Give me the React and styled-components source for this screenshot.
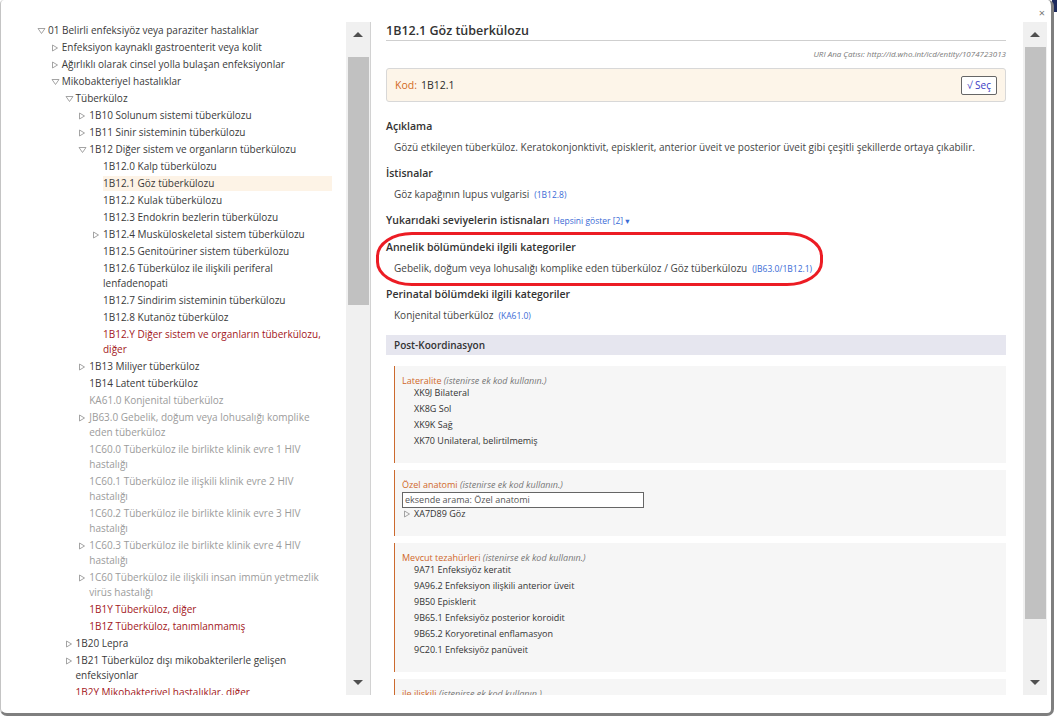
import React from 'react';
import styled, { createGlobalStyle } from 'styled-components';

const GlobalStyle = createGlobalStyle`
  html, body { margin: 0; padding: 0; background: #fff; }
  body { font-family: "Open Sans", "Noto Sans", "DejaVu Sans", sans-serif; color: #333; }
  * { box-sizing: border-box; }
`;

const Backdrop = styled.div`
  width: 1057px;
  height: 723px;
  overflow: hidden;
  background: linear-gradient(#1d2a5c, #1d2a5c) no-repeat right top / 5px 12px, #fff;
`;

const Dialog = styled.div`
  width: 1054px;
  height: 716px;
  background: #fff;
  border-left: 1px solid #c4c4c4;
  border-right: 3px solid #7f7f7f;
  border-bottom: 3px solid #7f7f7f;
  border-radius: 4px 6px 7px 7px;
  display: flex;
  flex-direction: column;
`;

const Header = styled.div`
  height: 22px;
  display: flex;
  justify-content: flex-end;
  align-items: center;
  padding-right: 6px;
`;

const Close = styled.span`
  font-size: 11px;
  color: #777;
  line-height: 1;
  margin-top: 2px;
`;

const Body = styled.div`
  height: 673px;
  display: flex;
`;

const LeftPanel = styled.div`
  width: 370px;
  border-right: 1px solid #d2d2d2;
  display: flex;
`;

const TreeViewport = styled.div`
  flex: 1;
  overflow: hidden;
  padding: 0 14px 0 0;
`;

const TreeRow = styled.div`
  display: flex;
  padding: 1px 0;
  padding-left: ${p => 36 + p.$level * 13.75}px;
  font-size: 10px;
  line-height: 15px;
  color: ${p => (p.$tone === 'grey' ? '#9b9b9b' : p.$tone === 'red' ? '#a3171c' : '#3a3a3a')};
`;

const Toggle = styled.span`
  flex: 0 0 11px;
  height: 15px;
  display: flex;
  align-items: center;
`;

const Label = styled.span`
  flex: 1;
  background: ${p => (p.$selected ? '#fdf3e6' : 'transparent')};
`;

const Bar = styled.div`
  width: 24px;
  background: #f0f0f0;
  display: flex;
  flex-direction: column;
`;

const ArrowBtn = styled.div`
  height: 25px;
  display: flex;
  align-items: center;
  justify-content: center;
`;

const Arrow = styled.span`
  width: 0;
  height: 0;
  border-left: 5px solid transparent;
  border-right: 5px solid transparent;
  ${p => (p.$dir === 'up' ? 'border-bottom: 5px solid #505050;' : 'border-top: 5px solid #505050;')}
`;

const Track = styled.div`
  flex: 1;
  padding: 0 1px 0 2px;
`;

const Thumb = styled.div`
  margin-top: ${p => p.$top}px;
  height: ${p => p.$height}px;
  background: #c1c1c1;
`;

const RightPanel = styled.div`
  flex: 1;
  display: flex;
  padding-right: 4px;
`;

const Content = styled.div`
  flex: 1;
  position: relative;
  overflow: hidden;
  padding: 0 17px 0 15px;
`;

const Title = styled.h1`
  margin: 0;
  font-size: 12.5px;
  font-weight: 600;
  line-height: 18px;
  color: #333;
  border-bottom: 1px solid #cfcfcf;
`;

const Uri = styled.div`
  margin-top: 7px;
  text-align: right;
  font-size: 8px;
  font-style: italic;
  line-height: 12px;
  color: #7a7a7a;
`;

const CodeBox = styled.div`
  margin: 8px 0 17px;
  height: 34px;
  display: flex;
  align-items: center;
  padding: 0 8px;
  background: #fdf5e9;
  border: 1px solid #d8d8d8;
  border-radius: 3px;
  font-size: 10.5px;
`;

const CodeLabel = styled.span`
  color: #d2691e;
  margin-right: 4px;
`;

const CodeValue = styled.span`
  color: #2b2b2b;
`;

const SelectButton = styled.button`
  margin-left: auto;
  width: 36px;
  height: 19px;
  padding: 0;
  border: 1px solid #666;
  border-radius: 2px;
  background: #fff;
  color: #3b3bc4;
  font-family: inherit;
  font-size: 10px;
  line-height: 17px;
`;

const Section = styled.div`
  margin-bottom: 11.5px;
`;

const Heading = styled.div`
  font-size: 10.5px;
  font-weight: 600;
  line-height: 14px;
  color: #333;
`;

const Text = styled.div`
  margin-top: 7px;
  padding-left: 8px;
  font-size: 10px;
  line-height: 14px;
  color: #444;
`;

const Link = styled.span`
  margin-left: ${p => (p.$gap ? p.$gap : 5)}px;
  font-size: 8.5px;
  font-weight: 400;
  color: #3a6bd6;
`;

const PostBar = styled.div`
  height: 20px;
  line-height: 20px;
  padding-left: 8px;
  background: #e6e6ef;
  font-size: 10px;
  font-weight: 600;
  color: #333;
  margin-bottom: 11px;
`;

const AxisBox = styled.div`
  margin: 0 0 7px 8px;
  padding: 9px 8px 12px 7px;
  background: #f6f6f6;
  border-left: 1px solid #cc6a2e;
`;

const AxisTitle = styled.div`
  font-size: 9px;
  line-height: 12px;
  color: #d0682a;
`;

const Hint = styled.span`
  font-style: italic;
  color: #777;
`;

const AxisItem = styled.div`
  display: flex;
  font-size: 9px;
  line-height: 12px;
  margin-bottom: 4px;
  color: #333;
`;

const ItemToggle = styled.span`
  flex: 0 0 12px;
  display: flex;
  align-items: center;
  padding-left: 1px;
`;

const SearchInput = styled.input`
  display: block;
  margin-top: 1px;
  width: 242px;
  height: 16px;
  padding: 0 2px;
  border: 1px solid #666;
  background: #fff;
  font-family: inherit;
  font-size: 9px;
  color: #555;
  outline: none;
  &::placeholder { color: #555; }
`;

const Annotation = styled.div`
  position: absolute;
  left: 5px;
  top: 210px;
  width: 447px;
  height: 54px;
  border: 3px solid #ec1c24;
  border-radius: 36px / 24px;
  pointer-events: none;
`;

const TriClosed = () => (
  <svg width="8" height="8" viewBox="0 0 8 8">
    <polygon points="1.5,1 6.5,4 1.5,7" fill="none" stroke="#9a9a9a" strokeWidth="0.9" />
  </svg>
);

const TriOpen = () => (
  <svg width="9" height="8" viewBox="0 0 9 8">
    <polygon points="1,1.5 8,1.5 4.5,6.5" fill="none" stroke="#9a9a9a" strokeWidth="0.9" />
  </svg>
);

const tree = [
  { l: 0, t: 'open', c: '01', x: 'Belirli enfeksiyöz veya paraziter hastalıklar' },
  { l: 1, t: 'closed', x: 'Enfeksiyon kaynaklı gastroenterit veya kolit' },
  { l: 1, t: 'closed', x: 'Ağırlıklı olarak cinsel yolla bulaşan enfeksiyonlar' },
  { l: 1, t: 'open', x: 'Mikobakteriyel hastalıklar' },
  { l: 2, t: 'open', x: 'Tüberküloz' },
  { l: 3, t: 'closed', c: '1B10', x: 'Solunum sistemi tüberkülozu' },
  { l: 3, t: 'closed', c: '1B11', x: 'Sinir sisteminin tüberkülozu' },
  { l: 3, t: 'open', c: '1B12', x: 'Diğer sistem ve organların tüberkülozu' },
  { l: 4, c: '1B12.0', x: 'Kalp tüberkülozu' },
  { l: 4, c: '1B12.1', x: 'Göz tüberkülozu', sel: true },
  { l: 4, c: '1B12.2', x: 'Kulak tüberkülozu' },
  { l: 4, c: '1B12.3', x: 'Endokrin bezlerin tüberkülozu' },
  { l: 4, t: 'closed', c: '1B12.4', x: 'Musküloskeletal sistem tüberkülozu' },
  { l: 4, c: '1B12.5', x: 'Genitoüriner sistem tüberkülozu' },
  { l: 4, c: '1B12.6', x: 'Tüberküloz ile ilişkili periferal lenfadenopati' },
  { l: 4, c: '1B12.7', x: 'Sindirim sisteminin tüberkülozu' },
  { l: 4, c: '1B12.8', x: 'Kutanöz tüberküloz' },
  { l: 4, c: '1B12.Y', x: 'Diğer sistem ve organların tüberkülozu, diğer', tone: 'red' },
  { l: 3, t: 'closed', c: '1B13', x: 'Miliyer tüberküloz' },
  { l: 3, c: '1B14', x: 'Latent tüberküloz' },
  { l: 3, c: 'KA61.0', x: 'Konjenital tüberküloz', tone: 'grey' },
  { l: 3, t: 'closed', c: 'JB63.0', x: 'Gebelik, doğum veya lohusalığı komplike eden tüberküloz', tone: 'grey' },
  { l: 3, c: '1C60.0', x: 'Tüberküloz ile birlikte klinik evre 1 HIV hastalığı', tone: 'grey' },
  { l: 3, c: '1C60.1', x: 'Tüberküloz ile ilişkili klinik evre 2 HIV hastalığı', tone: 'grey' },
  { l: 3, c: '1C60.2', x: 'Tüberküloz ile birlikte klinik evre 3 HIV hastalığı', tone: 'grey' },
  { l: 3, t: 'closed', c: '1C60.3', x: 'Tüberküloz ile birlikte klinik evre 4 HIV hastalığı', tone: 'grey' },
  { l: 3, t: 'closed', c: '1C60', x: 'Tüberküloz ile ilişkili insan immün yetmezlik virüs hastalığı', tone: 'grey' },
  { l: 3, c: '1B1Y', x: 'Tüberküloz, diğer', tone: 'red' },
  { l: 3, c: '1B1Z', x: 'Tüberküloz, tanımlanmamış', tone: 'red' },
  { l: 2, t: 'closed', c: '1B20', x: 'Lepra' },
  { l: 2, t: 'closed', c: '1B21', x: 'Tüberküloz dışı mikobakterilerle gelişen enfeksiyonlar' },
  { l: 2, c: '1B2Y', x: 'Mikobakteriyel hastalıklar, diğer', tone: 'red' },
];

const Scrollbar = ({ top, height }) => (
  <Bar>
    <ArrowBtn><Arrow $dir="up" /></ArrowBtn>
    <Track><Thumb $top={top} $height={height} /></Track>
    <ArrowBtn><Arrow $dir="down" /></ArrowBtn>
  </Bar>
);

const axes = [
  {
    name: 'Lateralite',
    items: ['XK9J Bilateral', 'XK8G Sol', 'XK9K Sağ', 'XK70 Unilateral, belirtilmemiş'],
  },
  {
    name: 'Özel anatomi',
    search: 'eksende arama: Özel anatomi',
    items: ['XA7D89 Göz'],
    toggles: true,
  },
  {
    name: 'Mevcut tezahürleri',
    items: [
      '9A71 Enfeksiyöz keratit',
      '9A96.2 Enfeksiyon ilişkili anterior üveit',
      '9B50 Episklerit',
      '9B65.1 Enfeksiyöz posterior koroidit',
      '9B65.2 Koryoretinal enflamasyon',
      '9C20.1 Enfeksiyöz panüveit',
    ],
  },
  { name: 'ile ilişkili', items: [] },
];

export default function App() {
  return (
    <Backdrop>
      <GlobalStyle />
      <Dialog>
        <Header>
          <Close>×</Close>
        </Header>
        <Body>
          <LeftPanel>
            <TreeViewport>
              {tree.map((r, i) => (
                <TreeRow key={i} $level={r.l} $tone={r.tone}>
                  <Toggle>{r.t === 'open' ? <TriOpen /> : r.t === 'closed' ? <TriClosed /> : null}</Toggle>
                  <Label $selected={r.sel}>{r.c ? `${r.c} ${r.x}` : r.x}</Label>
                </TreeRow>
              ))}
            </TreeViewport>
            <Scrollbar top={10} height={248} />
          </LeftPanel>
          <RightPanel>
            <Content>
              <Title>1B12.1 Göz tüberkülozu</Title>
              <Uri>URI Ana Çatısı: http://id.who.int/icd/entity/1074723013</Uri>
              <CodeBox>
                <CodeLabel>Kod:</CodeLabel>
                <CodeValue>1B12.1</CodeValue>
                <SelectButton>√ Seç</SelectButton>
              </CodeBox>
              <Section>
                <Heading>Açıklama</Heading>
                <Text>
                  Gözü etkileyen tüberküloz. Keratokonjonktivit, episklerit, anterior üveit ve posterior üveit gibi çeşitli şekillerde ortaya çıkabilir.
                </Text>
              </Section>
              <Section>
                <Heading>İstisnalar</Heading>
                <Text>
                  Göz kapağının lupus vulgarisi<Link>(1B12.8)</Link>
                </Text>
              </Section>
              <Section>
                <Heading>
                  Yukarıdaki seviyelerin istisnaları<Link $gap={4}>Hepsini göster [2] ▾</Link>
                </Heading>
              </Section>
              <Section>
                <Heading>Annelik bölümündeki ilgili kategoriler</Heading>
                <Text>
                  Gebelik, doğum veya lohusalığı komplike eden tüberküloz / Göz tüberkülozu<Link>(JB63.0/1B12.1)</Link>
                </Text>
              </Section>
              <Section>
                <Heading>Perinatal bölümdeki ilgili kategoriler</Heading>
                <Text>
                  Konjenital tüberküloz<Link>(KA61.0)</Link>
                </Text>
              </Section>
              <PostBar>Post-Koordinasyon</PostBar>
              {axes.map((a, i) => (
                <AxisBox key={i}>
                  <AxisTitle>
                    {a.name} <Hint>(istenirse ek kod kullanın.)</Hint>
                  </AxisTitle>
                  {a.search && <SearchInput placeholder={a.search} readOnly />}
                  {a.items.map((it, j) => (
                    <AxisItem key={j}>
                      <ItemToggle>{a.toggles ? <TriClosed /> : null}</ItemToggle>
                      <span>{it}</span>
                    </AxisItem>
                  ))}
                </AxisBox>
              ))}
              <Annotation />
            </Content>
            <Scrollbar top={0} height={572} />
          </RightPanel>
        </Body>
      </Dialog>
    </Backdrop>
  );
}
